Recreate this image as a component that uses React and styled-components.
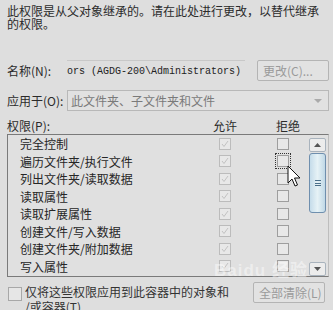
import React from "react";
import styled, { createGlobalStyle } from "styled-components";

const GlobalStyle = createGlobalStyle`
    html, body {
        margin: 0;
        padding: 0;
        background: #dedede;
    }
    body {
        font-family: "Noto Sans CJK SC", "Liberation Sans", sans-serif;
        font-size: 12px;
        color: #2b2b2b;
    }
`;

const Page = styled.div`
    position: relative;
    width: 333px;
    height: 310px;
    overflow: hidden;
    padding: 4px 4px 0 7px;
    box-sizing: border-box;
    display: flex;
    flex-direction: column;
`;

const Intro = styled.p`
    margin: 0;
    line-height: 13px;
    height: 56px;
    flex: none;
`;

const FieldRow = styled.div`
    display: flex;
    align-items: center;
    height: 21px;
    flex: none;
    margin-top: ${(p) => p.$top || 0}px;
`;

const Label = styled.span`
    width: 60px;
    flex: none;
    white-space: nowrap;
`;

const NameField = styled.div`
    flex: 1;
    height: 21px;
    border-top: 1px solid #c8c8c8;
    box-sizing: border-box;
    display: flex;
    align-items: center;
    font-family: "Liberation Mono", monospace;
    font-size: 10px;
    color: #222;
    overflow: hidden;
    white-space: nowrap;
`;

const GhostButton = styled.div`
    flex: none;
    width: 72px;
    height: 21px;
    margin-left: ${(p) => p.$left || 0}px;
    box-sizing: border-box;
    border: 1px solid #b4b4b4;
    border-radius: 2px;
    color: #9a9a9a;
    display: flex;
    align-items: center;
    padding-left: 5px;
    white-space: nowrap;
    background: #e2e2e2;
`;

const Select = styled.div`
    flex: 1;
    height: 21px;
    box-sizing: border-box;
    border: 1px solid #b8b8b8;
    display: flex;
    align-items: center;
    justify-content: space-between;
    padding: 0 6px 0 3px;
    color: #7a7a7a;
    background: #e1e1e1;
`;

const Caret = styled.span`
    width: 0;
    height: 0;
    border-left: 4px solid transparent;
    border-right: 4px solid transparent;
    border-top: 4px solid #aaa;
`;

const HeaderRow = styled.div`
    display: grid;
    grid-template-columns: 206px 63px 1fr;
    margin-top: 7px;
    height: 16px;
    line-height: 16px;
    flex: none;
`;

const ListBox = styled.div`
    width: 322px;
    height: 143px;
    flex: none;
    box-sizing: border-box;
    border: 1px solid #7a7a7a;
    border-right-color: #bdbdbd;
    display: flex;
    overflow: hidden;
    background: #e0e0e0;
`;

const Rows = styled.div`
    flex: 1;
    padding-left: 12px;
`;

const Row = styled.div`
    display: grid;
    grid-template-columns: 199px 58px 12px;
    align-items: center;
    height: 17.5px;
    white-space: nowrap;
    color: #262626;
`;

const Box = styled.span`
    position: relative;
    width: 12px;
    height: 12px;
    box-sizing: border-box;
    border: 1px solid ${(p) => (p.$deny ? "#9e9e9e" : "#bcbcbc")};
    background: #e8e8e8;
    outline: ${(p) => (p.$focus ? "1px dotted #333" : "none")};
    outline-offset: 1px;
    display: flex;
    align-items: center;
    justify-content: center;
`;

const Scrollbar = styled.div`
    width: 17px;
    flex: none;
    margin-right: 2px;
    padding-top: 3px;
    display: flex;
    flex-direction: column;
`;

const ArrowButton = styled.div`
    height: 14px;
    box-sizing: border-box;
    border: 1px solid #a9b3bd;
    border-radius: 2px;
    background: #ececec;
    display: flex;
    align-items: center;
    justify-content: center;
    margin-top: ${(p) => p.$top || 0}px;
`;

const Thumb = styled.div`
    margin-top: 1px;
    height: 60px;
    box-sizing: border-box;
    border: 1px solid #6f8fae;
    border-radius: 3px;
    background: linear-gradient(90deg, #c5dcea, #e6f2f6 50%, #c0d8e6);
    display: flex;
    align-items: center;
    justify-content: center;
`;

const Grip = styled.span`
    width: 6px;
    height: 6px;
    border-top: 1px solid #4b6f8a;
    border-bottom: 1px solid #4b6f8a;
    box-sizing: border-box;
    position: relative;
    &::after {
        content: "";
        position: absolute;
        left: 0;
        right: 0;
        top: 2px;
        border-top: 1px solid #4b6f8a;
    }
`;

const Footer = styled.div`
    display: flex;
    align-items: flex-start;
    margin-top: 5px;
    flex: none;
`;

const FooterCheck = styled.span`
    flex: none;
    width: 14px;
    height: 14px;
    box-sizing: border-box;
    border: 1px solid #a8a8a8;
    background: #e6e6e6;
    margin: 5px 3px 0 1px;
`;

const FooterText = styled.div`
    width: 221px;
    font-size: 12px;
    line-height: 15px;
    padding-top: 2px;
    color: #333;
`;

const Cursor = styled.svg`
    position: absolute;
    left: 287px;
    top: 165px;
`;

const Watermark = styled.div`
    position: absolute;
    left: 214px;
    top: 256px;
    font-family: "Liberation Sans", "Noto Sans CJK SC", sans-serif;
    font-weight: bold;
    font-size: 17px;
    color: rgba(255, 255, 255, 0.45);
    letter-spacing: 1px;
    pointer-events: none;
`;

const rows = [
    "完全控制",
    "遍历文件夹/执行文件",
    "列出文件夹/读取数据",
    "读取属性",
    "读取扩展属性",
    "创建文件/写入数据",
    "创建文件夹/附加数据",
    "写入属性",
    "写入扩展属性",
];

const Check = () => (
    <svg width="8" height="8" viewBox="0 0 8 8">
        <path d="M1 4 L3 6.5 L7 1" fill="none" stroke="#c2c2c2" strokeWidth="1" />
    </svg>
);

const App = () => {
    return (
        <Page>
            <GlobalStyle />
            <Intro>此权限是从父对象继承的。请在此处进行更改，以替代继承的权限。</Intro>

            <FieldRow>
                <Label>名称(N):</Label>
                <NameField>ors (AGDG-200\Administrators)</NameField>
                <GhostButton $left={12}>更改(C)...</GhostButton>
            </FieldRow>

            <FieldRow $top={9}>
                <Label>应用于(O):</Label>
                <Select>
                    此文件夹、子文件夹和文件
                    <Caret />
                </Select>
            </FieldRow>

            <HeaderRow>
                <span>权限(P):</span>
                <span>允许</span>
                <span>拒绝</span>
            </HeaderRow>

            <ListBox>
                <Rows>
                    {rows.map((r, i) => (
                        <Row key={r}>
                            <span>{r}</span>
                            <Box>
                                <Check />
                            </Box>
                            <Box $deny $focus={i === 1} />
                        </Row>
                    ))}
                </Rows>
                <Scrollbar>
                    <ArrowButton>
                        <svg width="7" height="4" viewBox="0 0 7 4">
                            <path d="M0 4 L3.5 0 L7 4 Z" fill="#555" />
                        </svg>
                    </ArrowButton>
                    <Thumb>
                        <Grip />
                    </Thumb>
                    <ArrowButton $top={49}>
                        <svg width="7" height="4" viewBox="0 0 7 4">
                            <path d="M0 0 L3.5 4 L7 0 Z" fill="#555" />
                        </svg>
                    </ArrowButton>
                </Scrollbar>
            </ListBox>

            <Footer>
                <FooterCheck />
                <FooterText>
                    仅将这些权限应用到此容器中的对象和
                    <br />
                    /或容器(T)
                </FooterText>
                <GhostButton $left={7}>全部清除(L)</GhostButton>
            </Footer>

            <Cursor width="14" height="24" viewBox="0 0 14 24">
                <path
                    d="M1 1 L1 18 L5 14 L8 21 L10.5 20 L7.5 13 L13 13 Z"
                    fill="#fff"
                    stroke="#111"
                    strokeWidth="1"
                    strokeLinejoin="round"
                />
            </Cursor>
            <Watermark>Baidu 经验</Watermark>
        </Page>
    );
};

export default App;
